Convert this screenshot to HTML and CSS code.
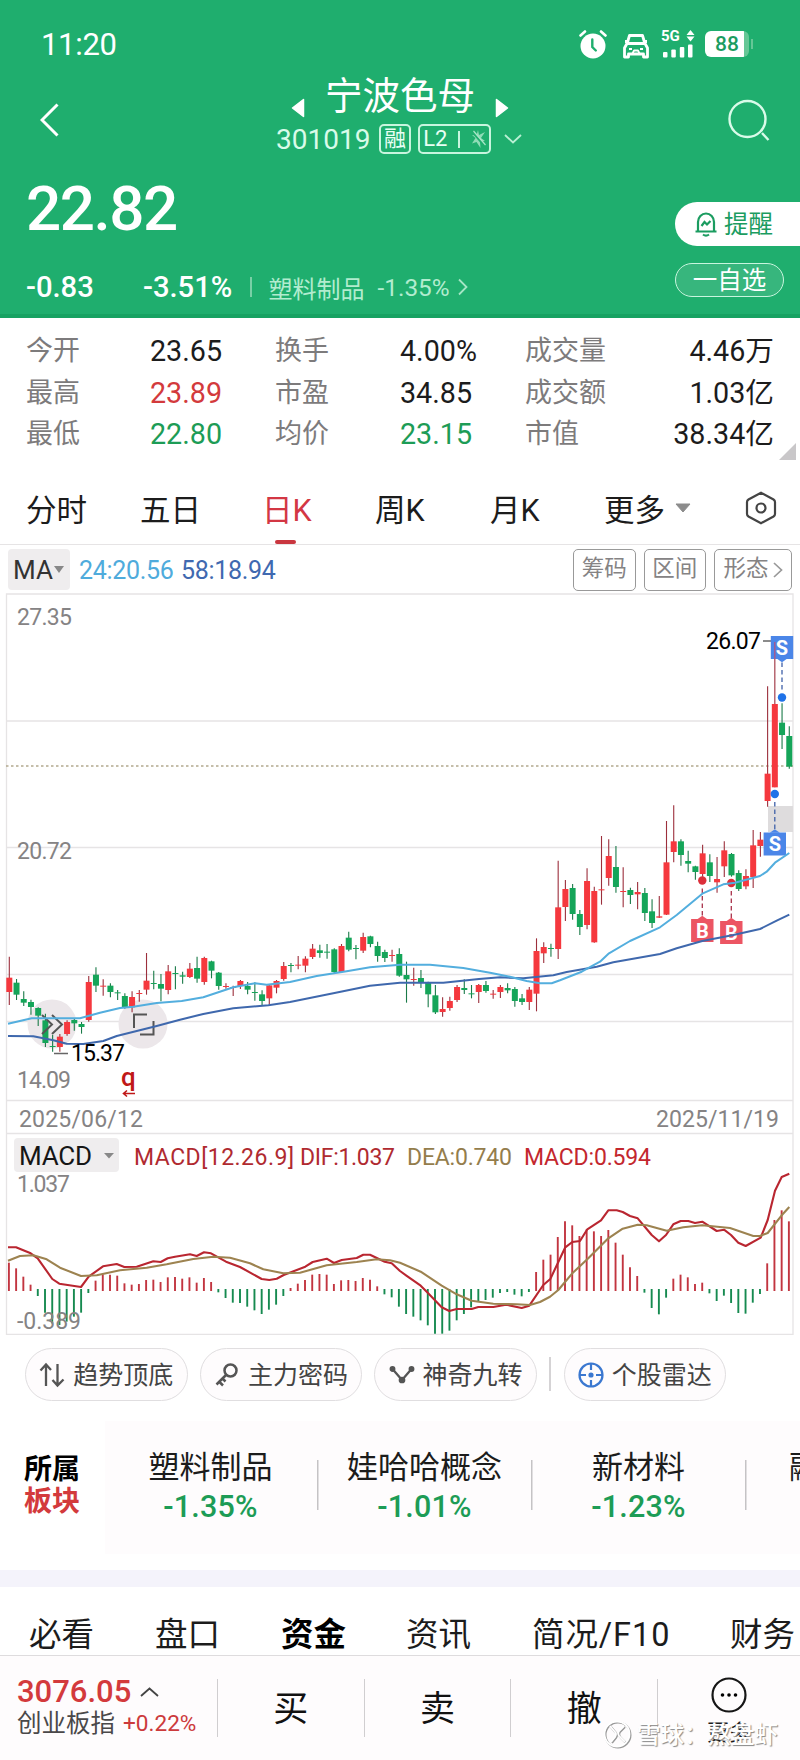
FILE: index.html
```html
<!DOCTYPE html>
<html lang="zh-CN">
<head>
<meta charset="utf-8">
<title>宁波色母 301019</title>
<link rel="stylesheet" href="styles.css">
</head>
<body>
<div class="phone">
<header class="hero">
  <div class="status">
    <span class="clock">11:20</span>
    <div class="status-icons">
      <svg width="28" height="30" viewBox="0 0 28 30"><circle cx="14" cy="17" r="12.500" fill="#fff"/><path d="M1.500 6.500 L6 2.500 M26.500 6.500 L22 2.500" stroke="#fff" stroke-width="2.600" fill="none" stroke-linecap="round"/><path d="M13.300 10.500 V18 L16.800 21.500" stroke="#1fae6e" stroke-width="2.400" fill="none" stroke-linecap="round"/></svg>
      <svg class="car" width="28" height="26" viewBox="0 0 28 26" fill="none" stroke="#fff" stroke-width="2.800" stroke-linejoin="round"><path d="M5 11 L7.500 2.500 H20.500 L23 11 M3 8.500 H5.500 M22.500 8.500 H25 M5 10.500 H23 L25.500 15 V24 H21.500 V21 H6.500 V24 H2.500 V15 Z"/><path d="M7 16 H10 M18 16 H21 M10.500 20.500 L12 17.500 H16 L17.500 20.500" stroke-width="1.800"/></svg>
      <svg class="signal" width="34" height="32" viewBox="0 -2 34 32" fill="#fff"><text class="five-g" x="0" y="11">5G</text><path d="M29.500 0 L33.500 5 H25.500 Z M29.500 11.500 L33.500 6.500 H25.500 Z"/><rect x="2" y="22" width="4.500" height="5.500" rx="1"/><rect x="10.300" y="19.500" width="4.500" height="8" rx="1"/><rect x="18.800" y="17" width="4.500" height="10.500" rx="1"/><rect x="27" y="14.500" width="4.500" height="13" rx="1"/></svg>
      <div class="battery"><span>88</span></div><i class="nub"></i>
    </div>
  </div>
  <div class="nav">
    <svg class="back" width="20" height="34" viewBox="0 0 20 34"><path d="M17.500 1.500 L2 17 L17.500 32.500" fill="none" stroke="#fff" stroke-width="3"/></svg>
    <div class="stock">
      <div class="stock-name">
        <svg width="14" height="20" viewBox="0 0 14 20"><path d="M12.500 1.500 V18.500 L1.500 10 Z" fill="#fff" stroke="#fff" stroke-linejoin="round" stroke-width="1.500"/></svg>
        <h1>宁波色母</h1>
        <svg width="14" height="20" viewBox="0 0 14 20"><path d="M1.500 1.500 V18.500 L12.500 10 Z" fill="#fff" stroke="#fff" stroke-linejoin="round" stroke-width="1.500"/></svg>
      </div>
      <div class="stock-code">
        <span class="code">301019</span>
        <span class="tag">融</span>
        <span class="tag level">L2<i></i><svg width="15" height="20" viewBox="0 0 15 20"><path d="M7 1 L8 6 L14 3 L10 9 L14 12 L9 12.500 L9.500 19 L5.500 13 L1 14.500 L4.500 9 L1 6 L5.500 6.500 Z" fill="#8fdcb6"/><path d="M1 2.500 L14 17.500" stroke="#1fae6e" stroke-width="2"/><path d="M2.500 2 L14.500 16" stroke="#a9e6c8" stroke-width="1.200"/></svg></span>
        <svg class="down" width="18" height="10" viewBox="0 0 18 10"><path d="M1 1 L9 8.500 L17 1" fill="none" stroke="#b9f0d4" stroke-width="1.800"/></svg>
      </div>
    </div>
    <svg class="search" width="42" height="44" viewBox="0 0 42 44" fill="none" stroke="#d9fbe9" stroke-width="2.400"><circle cx="19.500" cy="20" r="18"/><path d="M34 34 L40.500 41"/></svg>
  </div>
  <div class="price-area">
    <div class="price-left">
      <div class="price">22.82</div>
      <div class="change"><b class="diff">-0.83</b><b class="pct">-3.51%</b><i></i><span class="ind">塑料制品</span><span class="ind-pct">-1.35%</span><svg width="10" height="18" viewBox="0 0 10 18"><path d="M1 1.500 L8.500 9 L1 16.500" fill="none" stroke="#a5e6c6" stroke-width="1.800"/></svg></div>
    </div>
    <div class="price-actions">
      <div class="remind"><svg width="24" height="26" viewBox="0 0 24 26" fill="none" stroke="#1b9c60" stroke-width="2.200"><path d="M1.500 20.500 H22.500 M4 20.500 V11 A8 8.500 0 0 1 20 11 V20.500" stroke-linejoin="round"/><path d="M9 23.500 Q12 25.800 15 23.500 M7.500 15 L10.500 11 L13 13.500 L16.500 10"/></svg><span>提醒</span></div>
      <div class="fav">一自选</div>
    </div>
  </div>
</header>

<section class="stats">
  <span>今开</span><b>23.65</b><span>换手</span><b>4.00%</b><span>成交量</span><b class="end">4.46万</b>
  <span>最高</span><b class="up">23.89</b><span>市盈</span><b>34.85</b><span>成交额</span><b class="end">1.03亿</b>
  <span>最低</span><b class="down-c">22.80</b><span>均价</span><b class="down-c">23.15</b><span>市值</span><b class="end">38.34亿</b>
  <svg class="corner" width="17" height="17" viewBox="0 0 17 17"><path d="M17 0 V17 H0 Z" fill="#c9c7c9"/></svg>
</section>

<nav class="periods">
  <span>分时</span><span>五日</span><span class="active">日K</span><span>周K</span><span>月K</span><span class="more">更多<svg width="16" height="10" viewBox="0 0 16 10"><path d="M1 1 H15 L8 9 Z" fill="#8c8c8c" stroke="#8c8c8c" stroke-linejoin="round"/></svg></span>
  <svg width="32" height="34" viewBox="0 0 32 34" fill="none" stroke="#444" stroke-width="2.200"><path d="M16 1.800 L28.500 8.500 Q30 9.500 30 11 V23 Q30 24.500 28.500 25.500 L16 32.200 L3.500 25.500 Q2 24.500 2 23 V11 Q2 9.500 3.500 8.500 Z"/><circle cx="16" cy="17" r="4.500"/></svg>
</nav>

<section class="ma-row">
  <div class="ma">MA<svg width="10" height="7" viewBox="0 0 10 7"><path d="M0 0 H10 L5 7 Z" fill="#888"/></svg></div>
  <span class="ma24">24:20.56</span><span class="ma58">58:18.94</span>
  <div class="tools"><span>筹码</span><span>区间</span><span>形态<svg width="10" height="18" viewBox="0 0 10 18"><path d="M1 2 L8.500 9 L1 16" fill="none" stroke="#999" stroke-width="1.700"/></svg></span></div>
</section>

<svg class="chart" id="chart" width="800" height="742" viewBox="0 593 800 742">
  <g stroke="#e6e4e5" stroke-width="1.300" fill="none">
    <path d="M6.500 594 H793 V1334.500 H6.500 Z M6.500 721 H793 M6.500 847.500 H793 M6.500 974.500 H793 M6.500 1021.500 H793 M6.500 1100.500 H793 M6.500 1133.500 H793"/>
  </g>
  <rect x="768" y="806" width="25" height="26" fill="#dedcdd"/>
  <path d="M6 766 H793" stroke="#b3a98f" stroke-width="1.300" stroke-dasharray="2.500 2.500"/>
  <g class="axis">
    <text x="17" y="625" textLength="55">27.35</text>
    <text x="17" y="859" textLength="55">20.72</text>
    <text x="17" y="1088" textLength="54">14.09</text>
    <text x="19" y="1126.500" textLength="124">2025/06/12</text>
    <text x="656" y="1126.500" textLength="123">2025/11/19</text>
    <text x="17" y="1192" textLength="53">1.037</text>
  </g>
  <circle cx="52" cy="1024" r="24.500" fill="#ece7ea"/>
  <circle cx="143" cy="1024" r="24.500" fill="#ece7ea"/>
  <g id="candles"></g>
  <g stroke="#555" stroke-width="2" fill="none"><path d="M42 1015 L52 1024.500 L42 1034 M52 1015 L62 1024.500 L52 1034 M134 1028 V1014.500 H147 M153.500 1021 V1034.500 H140"/></g>
  <path d="M54 1053.500 H68 M763 641 H773" stroke="#666" stroke-width="1.300"/>
  <g id="marks"></g>
  <g id="averages"></g>
  <text class="extreme" x="71" y="1060.500" textLength="54">15.37</text>
  <text class="extreme" x="706" y="648.500" textLength="55">26.07</text>
  <text class="q" x="121" y="1086">q</text>
  <path d="M135 1093.500 H124 M127 1090.500 L123.500 1093.500 L127 1096.500" stroke="#c01818" stroke-width="1.600" fill="none"/>

  <rect x="14" y="1138" width="105" height="34" rx="4" fill="#efedee"/>
  <text class="macd-name" x="19" y="1165" textLength="73">MACD</text>
  <path d="M104 1153 H114 L109 1158.500 Z" fill="#888"/>
  <g class="macd-legend">
    <text x="134" y="1164.500" textLength="160" fill="#b02a30">MACD[12.26.9]</text>
    <text x="300" y="1164.500" textLength="95" fill="#b02a30">DIF:1.037</text>
    <text x="407" y="1164.500" textLength="105" fill="#947d4c">DEA:0.740</text>
    <text x="524" y="1164.500" textLength="127" fill="#c3272e">MACD:0.594</text>
  </g>
  <g id="macd"></g>
  <text class="macd-min" x="17" y="1329" textLength="64">-0.389</text>
</svg>

<section class="pills">
  <div class="pill"><svg width="26" height="26" viewBox="0 0 26 26" fill="none" stroke="#555" stroke-width="2.300"><path d="M7 24 V3 M1.500 8.500 L7 2.500 L12 8 M18.500 2 V23 M13.500 18 L18.500 23.500 L24.500 17.500"/></svg><span>趋势顶底</span></div>
  <div class="pill"><svg width="26" height="26" viewBox="0 0 26 26" fill="none" stroke="#555" stroke-width="2.500"><circle cx="16.500" cy="8.500" r="6"/><path d="M12 13 L2.500 22.500 M5 19.500 L9 23.500 M8.500 16.500 L11.500 19.500"/></svg><span>主力密码</span></div>
  <div class="pill"><svg width="26" height="26" viewBox="0 0 26 26" fill="#555" stroke="#555" stroke-width="2.300"><path d="M3.500 7 L13 18 L22.500 7" fill="none"/><circle cx="3.500" cy="7" r="1.800"/><circle cx="13" cy="18" r="2.200"/><circle cx="22.500" cy="7" r="1.800"/></svg><span>神奇九转</span></div>
  <i class="pill-sep"></i>
  <div class="pill"><svg width="26" height="26" viewBox="0 0 26 26" fill="none" stroke="#3b78d0" stroke-width="2.200"><circle cx="13" cy="13" r="11.500"/><path d="M13 2 V8 M13 18 V24 M2 13 H8 M18 13 H24"/><circle cx="13" cy="13" r="1.500" fill="#3b78d0"/></svg><span>个股雷达</span></div>
</section>

<section class="sectors">
  <div class="sector-title"><span>所属</span><span class="up">板块</span></div>
  <div class="sector-list">
    <div class="sector"><span>塑料制品</span><b>-1.35%</b></div>
    <div class="sector"><span>娃哈哈概念</span><b>-1.01%</b></div>
    <div class="sector"><span>新材料</span><b>-1.23%</b></div>
    <div class="sector last"><span>融</span></div>
  </div>
</section>
<div class="band"></div>
<nav class="detail-tabs"><span>必看</span><span>盘口</span><span class="bold">资金</span><span>资讯</span><span class="f10">简况/F10</span><span>财务</span></nav>

<footer class="trade">
  <div class="index">
    <div class="index-val">3076.05<svg width="19" height="10" viewBox="0 0 19 10"><path d="M1 9 L9.500 1.500 L18 9" fill="none" stroke="#444" stroke-width="1.800"/></svg></div>
    <div class="index-name">创业板指<em>+0.22%</em></div>
  </div>
  <div class="act">买</div><div class="act">卖</div><div class="act">撤</div>
  <div class="act-more"><svg width="36" height="36" viewBox="0 0 36 36"><circle cx="18" cy="18" r="16.500" fill="none" stroke="#161616" stroke-width="2.200"/><circle cx="11.500" cy="18" r="1.800"/><circle cx="18" cy="18" r="1.800"/><circle cx="24.500" cy="18" r="1.800"/></svg><span>更多</span></div>
  <div class="watermark"><svg width="30" height="30" viewBox="0 0 30 30" fill="none"><g stroke="#999" transform="translate(1 1)"><circle cx="14" cy="14" r="12.500" stroke-width="2"/><path d="M7 6 L12 12 Q14 14 12 17 L8 22 M21 6 L16 11 Q14 14 17 17 L22 22" stroke-width="2"/></g><g stroke="#fff"><circle cx="14" cy="14" r="12.500" stroke-width="1.800"/><path d="M7 6 L12 12 Q14 14 12 17 L8 22 M21 6 L16 11 Q14 14 17 17 L22 22" stroke-width="1.800"/></g></svg><span>雪球：熬盘虾</span></div>
</footer>
</div>
<script src="chart.js"></script>
</body>
</html>
```

FILE: styles.css
```css
* { box-sizing: border-box; }
body { margin: 0; background: #fff; font-family: Roboto, "Noto Sans CJK SC", sans-serif; color: #1c1c1c; }
svg { display: block; flex: none; }
b, h1, em { font-weight: 400; font-style: normal; margin: 0; }
.phone { width: 800px; height: 1760px; overflow: hidden; display: flex; flex-direction: column; background: #fff; }
.phone > * { flex: none; }

.hero { height: 318px; background: #1fae6e; border-bottom: 4px solid #17a262; color: #fff; }
.status { height: 88px; padding: 0 47px 0 41px; display: flex; justify-content: space-between; align-items: center; }
.clock { font-size: 31px; letter-spacing: -.3px; }
.status-icons { display: flex; align-items: center; }
.car { margin: 3px 0 0 15px; }
.signal { margin: -1px 0 0 11px; }
.five-g { font-size: 15px; font-weight: 700; }
.battery { width: 44px; height: 26px; margin: 0 0 0 10px; border-radius: 6px; background: linear-gradient(90deg, #fff 39px, #65c796 39px); display: flex; align-items: center; padding-left: 10px; color: #1b9c60; font-size: 21px; font-weight: 500; }
.nub { width: 2px; height: 10px; margin-left: 2px; background: #65c796; }
.nav { height: 88px; padding-left: 40px; display: flex; align-items: flex-start; }
.back { margin-top: 15px; }
.stock { width: 500px; margin-left: 86px; }
.stock-name { display: flex; align-items: flex-start; justify-content: center; padding-left: 8px; height: 33px; margin-top: -10px; }
.stock-name svg { margin-top: 20px; }
.stock-name h1 { font-size: 37.500px; line-height: 37px; margin: 0 20px; }
.stock-code { display: flex; align-items: center; height: 30px; margin-top: 13px; padding-left: 130px; color: #d9fbe9; }
.code { font-size: 28px; width: 103px; }
.tag { height: 30px; min-width: 32px; border: 2px solid #c8f5de; border-radius: 5px; display: flex; align-items: center; justify-content: center; font-size: 22px; line-height: 26px; color: #e8fff4; }
.level { width: 73px; margin-left: 7px; font-size: 22px; }
.level i { width: 1.5px; height: 17px; background: #c8f5de; margin: 0 11px 0 11px; }
.down { margin-left: 13px; }
.search { margin: 11px 0 0 82px; }
.price-area { display: flex; justify-content: space-between; height: 138px; }
.price-left { padding-left: 26px; }
.price { font-size: 62px; font-weight: 500; line-height: 62px; height: 62px; margin-top: 2px; letter-spacing: -1.500px; }
.change { display: flex; align-items: center; height: 30px; margin-top: 32px; font-size: 29px; white-space: nowrap; }
.change b { font-weight: 500; font-size: 29.200px; }
.diff { width: 117px; }
.pct { width: 107px; }
.change i { width: 1.5px; height: 20px; background: #79d0a6; margin-right: 17px; }
.ind { font-size: 24px; width: 109px; color: #b2eccf; }
.ind-pct { font-size: 24.400px; width: 80px; color: #b2eccf; }
.price-actions { width: 125px; padding-top: 26px; }
.remind { height: 44px; border-radius: 22px 0 0 22px; background: #fff; color: #1b9c60; font-size: 24.500px; display: flex; align-items: center; gap: 6px; padding-left: 19px; }
.remind span { margin-top: -3px; }
.fav { margin-top: 17px; width: 109px; height: 34px; border: 1.5px solid #c8f5de; border-radius: 17px; background: #37b67d; font-size: 24.500px; line-height: 33px; text-align: center; }

.stats { position: relative; height: 152px; padding: 12px 26px 0 26px; display: grid; grid-template-columns: 124px 125px 125px 125px 120px 1fr; grid-auto-rows: 41.700px; align-items: center; font-size: 28.700px; line-height: 40px; }
.stats span { font-size: 27px; color: #7d7b7c; }
.stats b { white-space: nowrap; }
.end { text-align: right; }
.up { color: #d33a3c; }
.stats .down-c { color: #1d9c56; }
.corner { position: absolute; right: 4px; bottom: 10px; }

.periods { height: 75px; padding: 2px 24px 0 26px; border-bottom: 1.500px solid #e6e4e5; display: grid; grid-template-columns: 114px 122px 113px 115px 114px 141px 32px; align-items: center; font-size: 30.500px; }
.periods .active { color: #d33744; position: relative; }
.active::after { content: ""; position: absolute; left: 13px; bottom: -14px; width: 21px; height: 4px; border-radius: 2px; background: #c9363f; }
.more { display: flex; align-items: center; gap: 10px; }

.ma-row { height: 48px; display: flex; align-items: center; padding: 1px 8px 0 8px; }
.ma { width: 62px; height: 41px; border-radius: 4px; background: #efedee; display: flex; align-items: center; gap: 1px; padding-left: 5px; font-size: 26px; color: #333; }
.ma24, .ma58 { font-size: 25px; letter-spacing: -.3px; margin-top: 2px; }
.ma24 { color: #4fabdc; width: 102px; margin-left: 9px; }
.ma58 { color: #4069b0; }
.tools { margin-left: auto; display: flex; gap: 8px; }
.tools span { width: 62.500px; height: 42px; border: 1.500px solid #999; border-radius: 5px; display: flex; align-items: center; justify-content: center; font-size: 22.500px; line-height: 36px; padding-bottom: 4px; color: #858384; gap: 4px; }
.tools span:last-child { width: 78px; }
.tools svg { margin-top: 4px; }

.chart { font-family: Roboto, "Noto Sans CJK SC", sans-serif; }
.axis, .macd-min { font-size: 23px; fill: #858384; }
.extreme { font-size: 23px; fill: #000; }
.q { font-size: 26px; font-weight: 500; fill: #c01818; }
.macd-name { font-size: 26px; fill: #161616; }
.macd-legend { font-size: 23px; }
.mark { font-size: 20px; font-weight: 700; fill: #fff; text-anchor: middle; }

.pills { height: 86px; padding: 13px 25px 0; display: flex; align-items: flex-start; }
.pill { width: 162.500px; height: 53px; margin-right: 12.200px; border: 1.500px solid #e0dee0; border-radius: 27px; background: #fefcfd; display: flex; align-items: center; justify-content: center; gap: 8px; font-size: 25px; color: #444; white-space: nowrap; }
.pill span { margin-top: -3px; }
.pill-sep { width: 1.500px; height: 34px; margin: 9px 13px 0 0; background: #d5d3d5; }

.sectors { height: 133px; display: flex; }
.sector-title { width: 105px; padding: 33px 0 0 24px; font-weight: 700; font-size: 28px; line-height: 32px; display: flex; flex-direction: column; color: #000; }
.sector-list { width: 695px; background: #fefcfd; display: flex; overflow: hidden; padding-top: 22px; }
.sector { flex: none; width: 214px; height: 94px; display: flex; flex-direction: column; align-items: center; line-height: 40px; font-size: 31px; background: linear-gradient(#c5c3c5, #c5c3c5) right 1px top 17px / 1.500px 50px no-repeat; padding-right: 3px; }
.sector b { color: #1d9c56; font-size: 30.500px; font-weight: 500; line-height: 40px; letter-spacing: .2px; margin-top: -1px; }
.sector span { white-space: nowrap; margin-top: 5px; }
.last { align-items: flex-start; padding-left: 42px; background: none; }
.band { height: 17px; margin-top: 16px; background: #f4f3fb; }
.detail-tabs { height: 69px; padding: 27px 0 0 29px; display: grid; grid-template-columns: 126px 126px 125px 126px 198px 90px; font-size: 32.500px; line-height: 42px; white-space: nowrap; border-bottom: 1.500px solid #dedcde; }
.detail-tabs .bold { font-weight: 700; color: #000; }
.f10 { letter-spacing: .9px; }

.trade { position: relative; height: 105px; background: #fefcfd; padding-left: 17px; display: flex; }
.index { width: 200px; padding-top: 19px; }
.index-val { font-size: 31px; line-height: 34px; color: #d33a3c; display: flex; align-items: center; gap: 9px; font-weight: 500; }
.index-name { font-size: 24.500px; line-height: 30px; color: #4a4849; display: flex; gap: 8px; }
.index-name em { font-size: 22.600px; color: #cc3a3c; }
.act { width: 147px; height: 58px; margin-top: 23px; border-left: 1.500px solid #d0ced0; text-align: center; font-size: 35px; line-height: 61px; color: #111; }
.act-more { width: 143px; height: 58px; margin-top: 23px; border-left: 1.500px solid #d0ced0; display: flex; flex-direction: column; align-items: center; }
.act-more svg { margin-top: -2px; }
.act-more span { font-size: 22px; line-height: 32px; margin-top: 4px; }
.watermark { position: absolute; left: 603px; top: 62px; display: flex; align-items: center; gap: 4px; color: #fff; font-size: 23.500px; line-height: 34px; font-weight: 500; white-space: nowrap; text-shadow: 1px 1px 1px #888; }
```

FILE: chart.js
```js
const NS = 'http://www.w3.org/2000/svg';
function add(parent, tag, attrs, text) {
  const el = document.createElementNS(NS, tag);
  for (const k in attrs) el.setAttribute(k, attrs[k]);
  if (text) el.textContent = text;
  parent.appendChild(el);
  return el;
}
const $ = id => document.getElementById(id);
const STEP = 7.222, X0 = 9.3;
const RED = '#f5383e', GREEN = '#15a559';

// direction, high, body top, body bottom, low (1/3 px from y = 900)
const days = `r 170 233 276 315,g 237 248 284 300,g 274 297 308 318,g 299 306 321 344,g 322 324 347 378,g 341 361 429 441,g 405 438 441 455,r 402 410 441 455,r 361 366 402 407,g 357 360 370 392,g 366 372 381 401,r 228 246 360 365,g 202 224 257 276,r 238 257 260 287,g 250 257 276 292,g 270 277 280 300,g 280 288 322 326,r 274 291 322 337,r 270 279 282 305,r 159 242 269 284,g 212 249 252 268,g 222 252 266 304,r 195 214 270 283,g 199 219 222 268,g 215 226 230 251,r 189 206 231 234,g 170 204 236 248,r 170 174 246 254,g 182 184 212 235,g 216 218 258 269,r 250 258 260 266,r 257 261 263 288,r 240 243 258 267,g 246 258 269 283,g 247 276 279 302,g 271 283 303 315,r 253 256 295 313,r 240 243 263 280,r 186 198 237 242,g 189 195 198 217,r 168 194 197 208,r 169 176 197 217,r 132 146 171 177,g 134 151 159 173,g 132 155 158 176,g 145 148 216 219,r 132 138 216 219,g 95 113 149 154,g 135 144 147 178,r 98 111 152 159,g 107 109 132 142,g 125 138 168 185,g 149 156 174 186,r 149 165 168 185,g 145 162 227 230,g 185 225 238 308,r 203 237 239 257,g 210 234 248 264,g 245 247 283 322,g 255 286 337 342,r 292 327 336 350,r 290 303 324 332,r 255 261 300 306,g 238 264 270 282,g 255 280 282 295,r 252 255 276 309,g 243 255 273 278,r 270 281 283 296,r 255 261 276 294,g 250 264 271 280,g 261 267 303 320,g 282 295 306 315,r 261 269 306 330,r 115 153 281 334,r 127 141 160 189,g 131 144 147 170,r -118 22 147 177,r -60 -33 21 63,g -48 -36 42 59,g 30 42 81 105,r -95 -57 75 88,r -40 -27 127 128,r -192 -32 -29 14,r -182 -132 -66 -43,g -162 -99 -39 -22,r -98 -27 -24 22,g -37 -30 -15 12,r -54 -24 -17 28,g -36 -21 39 63,g -2 34 69 84,r -12 49 53 54,r -237 -113 44 45,r -284 -176 -144 -113,g -182 -176 -135 -103,g -148 -117 -109 -83,g -103 -101 -84 -61,r -166 -140 -78 -70,g -137 -113 -72 -54,r -129 -63 -53 -22,r -176 -149 -101 -69,g -141 -138 -74 -70,g -89 -81 -33 -27,r -92 -72 -41 -32,r -210 -164 -69 -36,r -204 -181 -162 -130,r -641 -379 -297 -280,r -775 -588 -338 -338,g -590 -532 -495 -453,g -521 -492 -400 -394`;
days.split(',').forEach((d, i) => {
  const [c, ...v] = d.split(' ');
  const [h, t, b, l] = v.map(n => 900 + n / 3);
  const x = X0 + i * STEP;
  add($('candles'), 'path', { d: `M${x} ${h}V${l}`, stroke: c === 'r' ? '#9c2f3c' : '#1a7a48', 'stroke-width': 1.1 });
  add($('candles'), 'rect', { x: x - 3, y: t, width: 6, height: Math.max(b - t, 1), fill: c === 'r' ? RED : GREEN });
});

function line(parent, pts, y0, color, w) {
  const p = pts.split(' ').map(s => s.split(',').map(Number)).map(([x, y]) => `${(x / 3).toFixed(1)},${(y0 + y / 3).toFixed(1)}`).join(' ');
  add(parent, 'polyline', { points: p, fill: 'none', stroke: color, 'stroke-width': w, 'stroke-linejoin': 'round' });
}
line($('averages'), '24,408 100,409 160,421 200,431 250,432 310,423 350,408 470,378 540,359 610,342 700,325 805,316 870,306 1000,280 1110,257 1200,248 1330,248 1437,237 1500,232 1570,235 1660,226 1700,216 1790,200 1840,187 1980,162 2030,145 2107,123 2200,105 2280,87 2330,62 2368,44', 900, '#3f68ad', 2);
line($('averages'), '24,371 95,355 240,355 300,338 360,324 400,320 470,309 545,303 610,292 700,262 765,250 800,254 870,246 950,228 1040,214 1110,202 1200,194 1290,194 1390,204 1470,218 1530,230 1580,243 1620,250 1655,250 1680,241 1745,215 1800,185 1827,160 1890,123 1980,82 2030,45 2107,-19 2170,-47 2205,-52 2280,-72 2300,-85 2325,-112 2368,-141', 900, '#53aede', 2);

// histogram tips, 1/3 px from y = 1130; the zero line is at 480
const tips = [398,415,440,464,498,548,580,585,575,560,548,489,452,433,434,437,460,464,462,450,449,456,442,441,446,442,458,444,456,487,504,518,519,530,541,552,539,524,498,474,461,450,434,432,434,462,451,450,453,444,449,469,493,502,530,552,560,571,586,611,611,602,571,552,532,514,510,503,489,486,494,499,486,426,389,374,321,274,286,318,298,304,318,300,338,374,412,438,488,534,553,503,446,434,442,462,458,490,513,497,519,549,551,518,492,400,270,241,274];
tips.forEach((t, i) => {
  const up = t < 480, x = 8.9 + i * STEP;
  add($('macd'), 'path', { d: `M${x} ${1130 + (up ? 483 : 477) / 3}V${1130 + t / 3}`, stroke: up ? '#c23540' : '#168a50', 'stroke-width': 1.9 });
});
line($('macd'), '24,352 48,352 70,361 92,370 113,385 157,447 178,461 243,471 266,440 309,409 350,402 373,411 410,410 460,394 482,396 503,385 525,380 570,373 590,378 612,367 633,370 678,395 720,411 785,447 808,450 830,446 851,435 916,410 938,396 980,386 1002,399 1025,390 1070,384 1090,374 1110,374 1154,395 1175,400 1200,423 1218,436 1262,467 1283,488 1325,532 1348,543 1370,537 1415,537 1435,531 1480,531 1518,524 1565,534 1588,527 1630,465 1651,447 1696,352 1717,336 1740,333 1762,298 1803,271 1825,241 1850,241 1868,246 1890,258 1913,265 1955,315 1977,334 1998,315 2020,283 2042,273 2065,273 2085,279 2107,275 2150,303 2172,299 2193,315 2215,338 2237,348 2282,323 2303,270 2325,182 2345,141 2368,131', 1130, '#b92630', 2.1);
line($('macd'), '24,392 60,378 100,376 140,388 180,413 243,438 290,436 360,421 440,413 500,403 580,387 640,380 690,383 750,400 790,418 850,430 900,428 980,406 1070,396 1130,388 1170,391 1200,398 1262,425 1325,467 1370,493 1415,512 1480,521 1550,523 1590,525 1620,516 1650,500 1675,480 1717,430 1765,385 1825,325 1868,296 1913,284 1940,286 2000,302 2050,292 2107,286 2190,294 2260,318 2280,318 2303,309 2345,256 2368,231', 1130, '#9d8350', 2.1);

// trade marks: letter, box centre, dot y, direction of the pointer
[['B', 702.3, 930.5, 880.5, 1], ['B', 731.3, 932.5, 883, 1], ['S', 774.8, 844, 794, 1], ['S', 782, 647.500, 697.5, -1]].forEach(([s, x, y, dot, dir]) => {
  const g = $('marks'), blue = s === 'S', c = blue ? '#4b86e8' : '#ec5563';
  add(g, 'path', { d: `M${x} ${dot + dir * 8}V${y - dir * 14}`, stroke: blue ? '#3f60a8' : '#a8324a', 'stroke-width': 1.300, 'stroke-dasharray': '4.500 3' });
  add(g, 'circle', { cx: x, cy: dot, r: 4.2, fill: blue ? '#1f72e8' : '#dc2f3a' });
  add(g, 'rect', { x: x - 11.2, y: y - 11.5, width: 22.4, height: 23, fill: c });
  add(g, 'path', { d: `M${x - 5} ${y - dir * 11.2}h10l-5 ${-dir * 3.5}z`, fill: c });
  add(g, 'text', { x, y: y + 7, class: 'mark' }, s);
});
add($('marks'), 'path', { d: 'M774.8 642V659', stroke: '#b8507c', 'stroke-width': 1.2 });
```
